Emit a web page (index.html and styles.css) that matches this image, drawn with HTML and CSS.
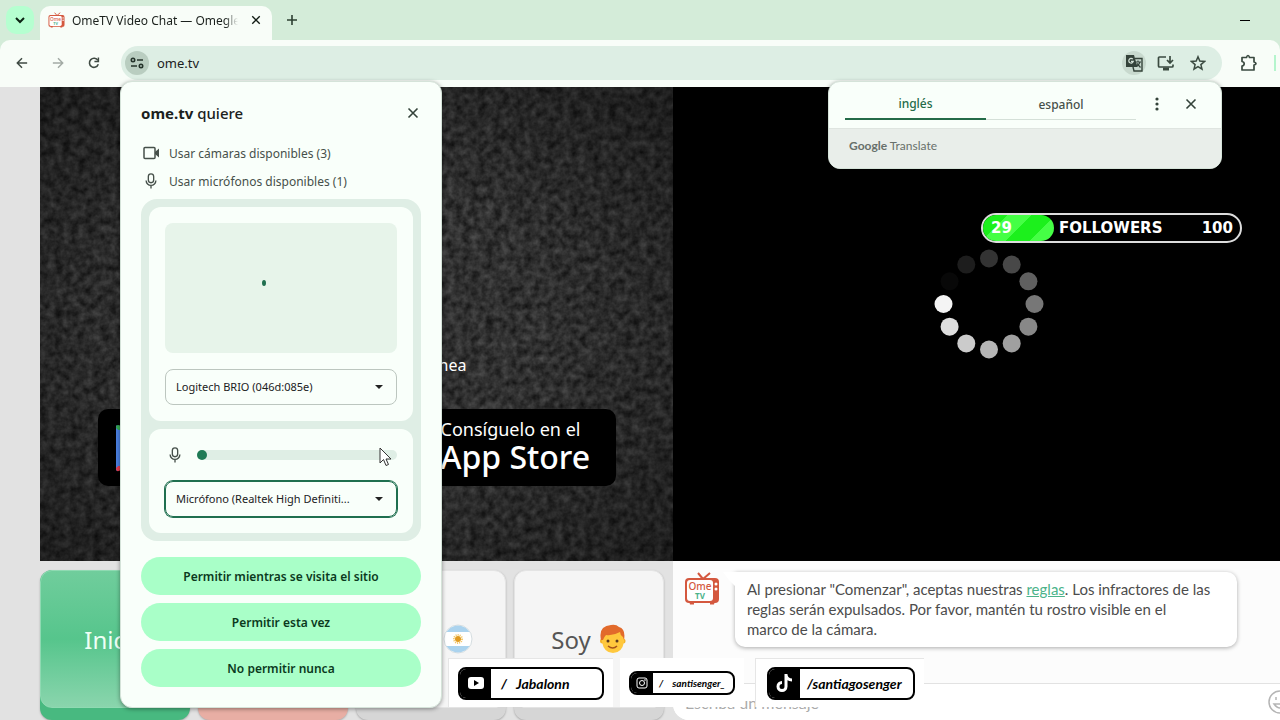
FILE: index.html
```html
<!DOCTYPE html>
<html lang="es">
<head>
	<meta charset="utf-8">
	<title>OmeTV Video Chat</title>
	<link rel="stylesheet" href="styles.css">
</head>
<body>
	<svg class="defs" width="0" height="0">
		<symbol id="mic" viewBox="0 0 16 18">
			<rect x="5" y="1" width="6" height="10" rx="3" fill="none" stroke="currentColor" stroke-width="1.5"/>
			<path d="M2.5 8.5a5.5 5.5 0 0 0 11 0M8 14v3.5" fill="none" stroke="currentColor" stroke-width="1.5"/>
		</symbol>
		<symbol id="close" viewBox="0 0 12 12">
			<path d="M1.5 1.5l9 9M10.5 1.5l-9 9" stroke="currentColor" stroke-width="1.6"/>
		</symbol>
		<symbol id="tv" viewBox="0 0 36 33">
			<path d="M14 1l5 6 7-6" fill="none" stroke="#d4583f" stroke-width="2"/>
			<rect x="1" y="6" width="34" height="25" rx="4" fill="#d4583f"/>
			<path d="M5 29h5v3.5H6zM26 29h5l-1 3.5h-4z" fill="#d4583f"/>
			<rect x="3" y="8" width="26" height="21" rx="3" fill="#fff"/>
			<circle cx="32" cy="12" r="1.5" fill="#fff"/>
			<circle cx="32" cy="17" r="1.5" fill="#fff"/>
			<text x="16" y="18" text-anchor="middle" font-size="10" font-weight="500" fill="#d4583f">Ome</text>
			<text x="16" y="27" text-anchor="middle" font-size="8" font-weight="700" fill="#4cb38a">TV</text>
		</symbol>
	</svg>

	<header class="browser">
		<div class="tabstrip">
			<button class="tab-search" aria-label="Buscar pestañas">
				<svg width="10" height="7" viewBox="0 0 10 7"><path d="M1 1l4 4 4-4" fill="none" stroke="#0b2313" stroke-width="2"/></svg>
			</button>
			<div class="tab">
				<svg width="17" height="16"><use href="#tv"/></svg>
				<span class="tab-title">OmeTV Video Chat — Omegle Random</span>
				<button class="icon-btn" aria-label="Cerrar pestaña"><svg width="10" height="10"><use href="#close"/></svg></button>
			</div>
			<button class="icon-btn new-tab" aria-label="Nueva pestaña">
				<svg width="12" height="12" viewBox="0 0 12 12"><path d="M6 1v10M1 6h10" stroke="#2c3f31" stroke-width="1.6"/></svg>
			</button>
			<button class="icon-btn minimize" aria-label="Minimizar"><svg width="10" height="10"><path d="M0 5.5h10" stroke="#000"/></svg></button>
		</div>
		<div class="toolbar">
			<div class="nav">
				<button class="icon-btn" aria-label="Atrás"><svg width="14" height="14" viewBox="0 0 14 14"><path d="M13 7H2M7 1.5L1.5 7 7 12.5" fill="none" stroke="#3f4a43" stroke-width="1.7"/></svg></button>
				<button class="icon-btn" aria-label="Adelante"><svg width="14" height="14" viewBox="0 0 14 14"><path d="M1 7h11M7 1.5L12.5 7 7 12.5" fill="none" stroke="#a3aba5" stroke-width="1.7"/></svg></button>
				<button class="icon-btn" aria-label="Recargar"><svg width="14" height="14" viewBox="0 0 14 14"><path d="M12 8.5A5.3 5.3 0 1 1 11.5 4" fill="none" stroke="#3f4a43" stroke-width="1.8"/><path d="M13 .5V6H7.5V4.4h3.8V.5z" fill="#3f4a43"/></svg></button>
			</div>
			<div class="omnibox">
				<button class="site-info" aria-label="Información del sitio">
					<svg width="14" height="12" viewBox="0 0 14 12" fill="none" stroke="#24332a" stroke-width="1.6"><circle cx="3" cy="3" r="1.7"/><path d="M7 3h6M1 9h6"/><circle cx="11" cy="9" r="1.7"/></svg>
				</button>
				<input class="url" type="text" value="ome.tv" aria-label="Dirección">
				<button class="round-btn shaded" aria-label="Traducir">
					<svg width="18" height="18" viewBox="0 0 18 18"><path d="M1 1h8l3.5 12H1z" fill="#34433a"/><path d="M10 4.5h7V17H9l-1-4" fill="none" stroke="#34433a" stroke-width="1.4"/><path d="M10.5 8h5.500M13 6.500V8M15 8q-1 3-3.500 4.500M12 9.500l3.500 4" fill="none" stroke="#34433a" stroke-width="1.2"/><path d="M7.800 5.200A2.300 2.300 0 1 0 8.300 7.400H6" fill="none" stroke="#d4e2d8" stroke-width="1.2"/></svg>
				</button>
				<button class="round-btn" aria-label="Instalar">
					<svg width="18" height="16" viewBox="0 0 18 16" fill="none" stroke="#3a4a40" stroke-width="1.7"><path d="M9 2H2.500Q1.500 2 1.500 3v8q0 1 1 1H15q1 0 1-1V9.500M13 1v6.500M10 5l3 3 3-3"/><path d="M6 14h6" stroke-width="3"/></svg>
				</button>
				<button class="round-btn" aria-label="Favoritos">
					<svg width="16" height="16" viewBox="0 0 16 16"><path d="M8 1.800l1.800 4.300 4.700.4-3.600 3.100 1.100 4.600L8 11.700l-4 2.500 1.100-4.600L1.500 6.500l4.700-.4z" fill="none" stroke="#3a4a40" stroke-width="1.5"/></svg>
				</button>
			</div>
			<button class="icon-btn extensions" aria-label="Extensiones">
				<svg width="18" height="18" viewBox="0 0 18 18"><path d="M2 3.500h4.500q.5-2 1.500-2t1.500 2H14v4.500q2 .5 2 1.500t-2 1.500V16H2v-4q2.200-.5 2.200-2.300T2 7.500z" fill="none" stroke="#3a4a40" stroke-width="1.7" stroke-linejoin="round"/></svg>
			</button>
			<span class="divider"></span>
		</div>
	</header>

	<main class="page">
		<section class="video stranger">
			<svg class="noise" width="100%" height="100%">
				<filter id="grain" x="0" y="0" width="100%" height="100%" color-interpolation-filters="sRGB">
					<feTurbulence type="fractalNoise" baseFrequency="0.13" numOctaves="3" seed="4"/>
					<feColorMatrix values=".3 0 0 0 .04  .3 0 0 0 .04  .3 0 0 0 .04  0 0 0 0 1"/>
				</filter>
				<rect width="100%" height="100%" filter="url(#grain)"/>
			</svg>
			<div class="vignette"></div>
			<div class="promo">
				<p class="online">usuarios en línea</p>
				<div class="stores">
					<a href="#" class="store google" aria-label="Google Play">
						<svg width="46" height="50" viewBox="0 0 46 50"><path d="M2 2l22 23L2 48z" fill="#4a7fe0"/><path d="M2 5q0-5 5-2l25 15-8 7z" fill="#34a853"/><path d="M2 45q0 5 5 2l25-15-8-7z" fill="#e33b4e"/><path d="M2 7h8v36H2z" fill="#4a7fe0"/><path d="M32 18l12 7-12 7-8-7z" fill="#fbbc04"/></svg>
					</a>
					<a href="#" class="store apple">
						<span class="store-small">Consíguelo en el</span>
						<span class="store-name">App Store</span>
					</a>
				</div>
			</div>
		</section>

		<section class="video own">
			<svg width="110" height="110" viewBox="-55 -55 110 110">
				<circle cx="0" cy="-45.5" r="9" fill="#333"/>
				<circle cx="22.7" cy="-39.4" r="9" fill="#484848"/>
				<circle cx="39.4" cy="-22.7" r="9" fill="#606060"/>
				<circle cx="45.5" cy="0" r="9" fill="#777"/>
				<circle cx="39.4" cy="22.7" r="9" fill="#888"/>
				<circle cx="22.7" cy="39.4" r="9" fill="#a0a0a0"/>
				<circle cx="0" cy="45.5" r="9" fill="#b5b5b5"/>
				<circle cx="-22.7" cy="39.4" r="9" fill="#cbcbcb"/>
				<circle cx="-39.4" cy="22.7" r="9" fill="#dedede"/>
				<circle cx="-45.5" cy="0" r="9" fill="#f4f4f4"/>
				<circle cx="-39.4" cy="-22.7" r="9" fill="#080808"/>
				<circle cx="-22.7" cy="-39.4" r="9" fill="#1d1d1d"/>
			</svg>
		</section>

		<section class="controls">
			<button class="key green"><span class="face">Inicio</span></button>
			<button class="key pink" aria-label="Parar"><span class="face"></span></button>
			<button class="key"><span class="face">País
				<svg width="30" height="30" viewBox="0 0 30 30"><circle cx="15" cy="15" r="14" fill="#fff" stroke="#d5dde0"/><path d="M3.500 8a13.500 13.500 0 0 1 23 0zM3.500 22a13.500 13.500 0 0 0 23 0z" fill="#abd3ee"/><circle cx="15" cy="15" r="3" fill="#e09a20"/><circle cx="15" cy="15" r="4" fill="none" stroke="#f3c460" stroke-width="2" stroke-dasharray="1 1"/></svg>
			</span></button>
			<button class="key"><span class="face">Soy
				<svg width="28" height="30" viewBox="0 0 28 30"><circle cx="3.500" cy="17" r="2.500" fill="#f4b42c"/><circle cx="24" cy="17" r="2.500" fill="#f4b42c"/><path d="M3 13q0-8 11-8t11 8v5q-2 11-11 11T3 18z" fill="#ffc83d"/><path d="M2 16Q-1 2 12 1q5-1 8 2 7 2 5 13l-1-3q-3-2-3-5-7 4-14 3-2 2-3 5z" fill="#e26a2b"/><circle cx="9" cy="17" r="1.5" fill="#5b3a20"/><circle cx="18" cy="17" r="1.5" fill="#5b3a20"/><path d="M9 22q5 4 9 0" fill="none" stroke="#a6531b" stroke-width="1.5"/></svg>
			</span></button>
		</section>

		<section class="chat">
			<div class="messages">
				<svg width="36" height="33"><use href="#tv"/></svg>
				<p class="message">Al presionar "Comenzar", aceptas nuestras <a href="#">reglas</a>. Los infractores de las reglas serán expulsados. Por favor, mantén tu rostro visible en el<br>marco de la cámara.</p>
			</div>
			<form class="compose">
				<input type="text" placeholder="Escriba un mensaje" aria-label="Mensaje">
				<button type="button" class="icon-btn" aria-label="Emoji">
					<svg width="24" height="24" viewBox="0 0 24 24" fill="none" stroke="#b5b5b5" stroke-width="1.5"><circle cx="12" cy="12" r="11"/><path d="M6 14q6 8 12 0z"/><path d="M8 7v3M16 7v3"/></svg>
				</button>
			</form>
		</section>
	</main>

	<!-- permission prompt -->
	<div class="dialog permission" role="dialog" aria-labelledby="ask">
		<div class="dialog-head">
			<h1 id="ask"><b>ome.tv</b> quiere</h1>
			<button class="icon-btn" aria-label="Cerrar"><svg width="12" height="12"><use href="#close"/></svg></button>
		</div>
		<ul class="requests">
			<li><svg width="18" height="18" viewBox="0 0 18 18"><rect x="2" y="3.5" width="11" height="11" rx="1" fill="none" stroke="currentColor" stroke-width="1.5"/><path d="M13 8l4-3.500v9L13 10z" fill="currentColor"/></svg>Usar cámaras disponibles (3)</li>
			<li><svg width="18" height="16"><use href="#mic"/></svg>Usar micrófonos disponibles (1)</li>
		</ul>
		<div class="devices">
			<div class="device">
				<div class="preview"><svg width="6" height="8"><ellipse cx="3" cy="4" rx="2" ry="3" fill="#1f6f4f"/></svg></div>
				<div class="select">
					<select aria-label="Cámara"><option>Logitech BRIO (046d:085e)</option></select>
				</div>
			</div>
			<div class="device">
				<div class="level">
					<svg width="20" height="16"><use href="#mic"/></svg>
					<input type="range" min="0" max="100" value="0" aria-label="Nivel del micrófono">
				</div>
				<div class="select focused">
					<select aria-label="Micrófono"><option>Micrófono (Realtek High Definiti...</option></select>
				</div>
			</div>
		</div>
		<div class="answers">
			<button>Permitir mientras se visita el sitio</button>
			<button>Permitir esta vez</button>
			<button>No permitir nunca</button>
		</div>
	</div>

	<div class="dialog translate">
		<div class="languages">
			<button class="language active">inglés</button>
			<button class="language">español</button>
			<button class="icon-btn" aria-label="Opciones"><svg width="4" height="14" fill="#34433a"><circle cx="2" cy="2" r="1.6"/><circle cx="2" cy="7" r="1.6"/><circle cx="2" cy="12" r="1.6"/></svg></button>
			<button class="icon-btn" aria-label="Cerrar"><svg width="12" height="12"><use href="#close"/></svg></button>
		</div>
		<div class="brand"><b>Google</b> Translate</div>
	</div>

	<!-- stream overlays -->
	<div class="goal">
		<div class="goal-done">29</div>
		<span>FOLLOWERS</span>
		<span class="goal-total">100</span>
	</div>

	<div class="socials">
		<div class="social">
			<div class="handle">
				<span class="logo"><svg width="18" height="14" viewBox="0 0 18 14"><rect x="1" y="1" width="16" height="12" rx="3" fill="#fff"/><path d="M7 4l5 3-5 3z"/></svg></span>
				<span class="name"><i>/</i> Jabalonn</span>
			</div>
		</div>
		<div class="social instagram">
			<div class="handle">
				<span class="logo"><svg width="12" height="12" viewBox="0 0 12 12" fill="none" stroke="#fff"><rect x="1" y="1" width="10" height="10" rx="2"/><circle cx="6" cy="6" r="2.5"/><circle cx="9" cy="3" r=".4"/></svg></span>
				<span class="name"><i>/</i> santisenger_</span>
			</div>
		</div>
		<div class="social tiktok">
			<div class="handle">
				<span class="logo"><svg width="18" height="20" viewBox="0 0 18 20"><path d="M10 1v12.500a4 4 0 1 1-4-4M10 2q1 5 6 5" fill="none" stroke="#fff" stroke-width="3"/></svg></span>
				<span class="name">/santiagosenger</span>
			</div>
		</div>
	</div>

	<svg class="cursor" width="13" height="20" viewBox="0 0 13 20"><path d="M1 1v15l3.500-3.500 2.500 6 2.500-1-2.500-5.500h5z" fill="#fff" stroke="#333"/></svg>
</body>
</html>
```
FILE: styles.css
```css
* {
	box-sizing: border-box;
}
body {
	margin: 0;
	height: 100vh;
	display: flex;
	flex-direction: column;
	overflow: hidden;
	position: relative;
	background: #e2e2e2;
	color: #1b211d;
	font-family: "Noto Sans", "Open Sans", sans-serif;
	font-size: 12px;
}
button, input, select {
	font: inherit;
	color: inherit;
}
button {
	border: 0;
	padding: 0;
}
.defs {
	display: none;
}
.icon-btn {
	display: flex;
	align-items: center;
	justify-content: center;
	background: none;
	color: #34433a;
}

/* browser */
.browser {
	background: #d4ecd9;
}
.tabstrip {
	height: 40px;
	display: flex;
	align-items: center;
	padding: 0 30px 0 6px;
}
.tab-search {
	width: 28px;
	height: 28px;
	border-radius: 10px;
	background: #b5ffd0;
	display: flex;
	align-items: center;
	justify-content: center;
}
.tab {
	align-self: flex-end;
	width: 232px;
	height: 34px;
	margin-left: 6px;
	padding: 0 10px 6px 8px;
	border-radius: 10px 10px 0 0;
	background: #f8fdf8;
	display: flex;
	align-items: center;
	gap: 7px;
}
.tab .icon-btn {
	width: 12px;
	margin-left: auto;
	color: #101a13;
}
.tab-title {
	width: 166px;
	overflow: hidden;
	white-space: nowrap;
	-webkit-mask-image: linear-gradient(to right, #000 92%, transparent);
	mask-image: linear-gradient(to right, #000 92%, transparent);
}
.new-tab {
	margin-left: 14px;
}
.minimize {
	margin-left: auto;
}
.toolbar {
	height: 47px;
	padding: 0 4px 2px 16px;
	border-radius: 10px 10px 0 0;
	background: #f8fdf8;
	display: flex;
	align-items: center;
}
.nav {
	display: flex;
	gap: 24px;
	width: 105px;
	flex: none;
}
.nav .icon-btn {
	width: 12px;
}
.omnibox {
	flex: 1;
	height: 34px;
	border-radius: 17px;
	padding: 0 12px 0 4px;
	background: #ddeee4;
	display: flex;
	align-items: center;
	gap: 8px;
}
.site-info, .round-btn {
	width: 24px;
	height: 24px;
	border-radius: 12px;
	background: none;
	display: flex;
	align-items: center;
	justify-content: center;
}
.site-info {
	background: #b9cdc0;
}
.shaded {
	background: #c8d9ce;
}
.url {
	flex: 1;
	border: 0;
	padding: 0;
	background: none;
	font-size: 13px;
}
.extensions {
	margin: 0 16px 0 18px;
}
.divider {
	width: 2px;
	height: 16px;
	background: #b5f5cd;
}

/* site; the last strip of the right column runs past the window */
.page {
	flex: 1;
	margin: 0 -26px 0 40px;
	display: grid;
	grid-template-columns: 1fr 1fr;
	grid-template-rows: 1fr 159px;
}
.video {
	position: relative;
	background: #000;
	display: flex;
	justify-content: center;
	overflow: hidden;
}
.own {
	align-items: center;
	padding: 0 2px 40px 0;
}
.noise, .vignette {
	position: absolute;
	left: 0;
	top: 0;
}
.vignette {
	width: 100%;
	height: 100%;
	background: radial-gradient(transparent 40%, rgba(0, 0, 0, .4));
}
.promo {
	position: relative;
	align-self: flex-end;
	margin-bottom: 75px;
	color: #fff;
}
.online {
	margin: 0 149px 32px 0;
	text-align: right;
	font-size: 16px;
	line-height: 24px;
}
.stores {
	display: flex;
	gap: 18px;
}
.store {
	width: 250px;
	height: 77px;
	border-radius: 10px;
	background: #000;
	color: #fff;
	text-decoration: none;
	display: flex;
	flex-direction: column;
	justify-content: center;
}
.google {
	padding-left: 16px;
}
.apple {
	padding: 0 0 4px 75px;
}
.store-small {
	font-size: 18px;
	line-height: 22px;
	white-space: nowrap;
}
.store-name {
	font-size: 32px;
	line-height: 34px;
	font-weight: 500;
	white-space: nowrap;
}

.controls {
	padding: 9px 9px 0 0;
	display: grid;
	grid-template-columns: repeat(4, 1fr);
	gap: 8px;
}
.key {
	display: flex;
	flex-direction: column;
	border-radius: 12px;
	background: #d6d6d6;
	box-shadow: 0 1px 2px #aaa;
	color: #555;
	font-size: 24px;
}
.face {
	width: 100%;
	height: 138px;
	border-radius: 12px;
	background: #f5f5f5;
	border: 1px solid #e4e4e4;
	display: flex;
	align-items: center;
	justify-content: center;
	gap: 8px;
}
.green {
	background: #48b980;
	color: #effff6;
}
.green .face {
	border-color: #8fdab2;
	background: linear-gradient(#70cd9c, #56c58c 50%, #8ad5ad);
}
.pink, .pink .face {
	background: #e8aea4;
	border-color: #e8aea4;
}

.chat {
	display: flex;
	flex-direction: column;
	background: #fcfcfc;
	border-radius: 0 0 0 16px;
}
.messages {
	flex: 1;
	display: flex;
	align-items: flex-start;
	gap: 15px;
	padding: 11px 69px 0 11px;
}
.messages svg {
	flex: none;
}
.message {
	flex: 1;
	position: relative;
	margin: 0;
	padding: 7px 12px 8px;
	border-radius: 0 10px 10px 10px;
	background: #fff;
	box-shadow: 0 1px 4px #aaa;
	color: #4c4c4c;
	font-family: Lato, sans-serif;
	font-size: 15px;
	line-height: 20px;
}
.message::before {
	content: "";
	position: absolute;
	left: -12px;
	top: 0;
	border: 6px solid transparent;
	border-top: 8px solid #fff;
	border-right: 6px solid #fff;
}
.message a {
	color: #4cb38a;
}
.compose {
	height: 37px;
	margin: 0;
	padding: 0 14px 0 12px;
	border-top: 1px solid #e2e2e2;
	border-radius: 0 0 0 16px;
	background: #fff;
	display: flex;
	align-items: center;
}
.compose input {
	flex: 1;
	border: 0;
	background: none;
	padding: 0;
	font-family: Lato, sans-serif;
	font-size: 16px;
}
.compose input::placeholder {
	color: #aaa;
}

/* browser bubbles */
.dialog {
	position: absolute;
	border: 1px solid #d5e3d9;
	border-radius: 12px;
	background: #f9fffa;
	box-shadow: 0 1px 4px rgba(0, 0, 0, .4);
}
.permission {
	left: 120px;
	top: 81px;
	width: 322px;
	padding: 16px 20px 20px;
}
.dialog-head {
	height: 30px;
	margin-bottom: 11px;
	display: flex;
	align-items: center;
	justify-content: space-between;
}
.dialog-head h1 {
	margin: 0;
	font-size: 15px;
	font-weight: 500;
}
.dialog-head .icon-btn {
	width: 16px;
	height: 16px;
}
.requests {
	margin: 0 0 4px;
	padding: 0;
	list-style: none;
	color: #46504a;
}
.requests li {
	height: 28px;
	display: flex;
	align-items: center;
	gap: 9px;
	padding-left: 1px;
}
.devices {
	padding: 8px;
	border-radius: 16px;
	background: #dfeee5;
	display: grid;
	gap: 8px;
}
.device {
	padding: 16px;
	border-radius: 12px;
	background: #f9fffa;
	display: grid;
	gap: 16px;
}
.preview {
	height: 130px;
	border-radius: 8px;
	background: #e7f4ea;
	display: flex;
	align-items: center;
	padding: 0 96px 10px;
}
.select {
	position: relative;
}
.select::after {
	content: "";
	position: absolute;
	right: 14px;
	top: 16px;
	border: 4px solid transparent;
	border-top-color: #222;
	border-bottom: 0;
}
.select select {
	appearance: none;
	display: block;
	width: 100%;
	height: 36px;
	padding: 0 30px 2px 10px;
	border: 1px solid #bcc6bf;
	border-radius: 8px;
	background: none;
	font-size: 11px;
}
.focused select {
	border-color: #1f6f4f;
	box-shadow: 0 0 0 1px #1f6f4f;
}
.level {
	height: 20px;
	display: flex;
	align-items: center;
	gap: 12px;
	color: #46504a;
}
.level input {
	appearance: none;
	flex: 1;
	height: 10px;
	margin: 0;
	border-radius: 5px;
	background: #dfeee5;
}
.level input::-webkit-slider-thumb {
	appearance: none;
	width: 10px;
	height: 10px;
	border-radius: 5px;
	background: #1f7a55;
}
.answers {
	margin-top: 16px;
	display: grid;
	gap: 8px;
}
.answers button {
	height: 38px;
	border-radius: 19px;
	background: #a9ffc8;
	color: #0b3a1d;
	font-weight: 600;
}
.translate {
	right: 58px;
	top: 81px;
	width: 394px;
	overflow: hidden;
}
.languages {
	height: 46px;
	padding: 0 24px 8px 16px;
	display: flex;
	align-items: center;
}
.language {
	width: 150px;
	height: 38px;
	background: none;
	border-bottom: 1px solid #d5e0d8;
	padding-top: 7px;
	font-weight: 500;
	color: #46504a;
}
.language.active {
	width: 141px;
	border-bottom: 2px solid #246b48;
	color: #246b48;
}
.languages .icon-btn {
	width: 12px;
	margin: 6px 0 0 15px;
}
.languages .icon-btn + .icon-btn {
	margin-left: 22px;
}
.brand {
	height: 40px;
	padding: 8px 20px;
	border-top: 1px solid #dfe5e0;
	background: #e9eeea;
	color: #68706b;
	font-family: Lato, sans-serif;
	line-height: 18px;
}

/* stream */
.goal {
	position: absolute;
	right: 38px;
	top: 213px;
	width: 261px;
	height: 30px;
	border: 2px solid #ddd;
	border-radius: 15px;
	background: #000;
	color: #fff;
	display: flex;
	align-items: center;
	font: bold 15px "DejaVu Sans", sans-serif;
}
.goal-done {
	width: 71px;
	height: 26px;
	margin-right: 5px;
	padding-left: 8px;
	border-radius: 13px;
	background: linear-gradient(135deg, #1cf01c 25%, #45ff45 25%, #45ff45 50%, #1cf01c 50%, #1cf01c 75%, #45ff45 75%);
	line-height: 26px;
}
.goal-total {
	margin-left: auto;
	padding-right: 7px;
}
.socials {
	position: absolute;
	left: 448px;
	bottom: 13px;
	height: 49px;
	display: flex;
	font-family: Lato, sans-serif;
	font-style: italic;
	font-weight: bold;
	color: #000;
}
.social {
	width: 165px;
	padding: 0 9px;
	margin-right: 7px;
	background: #fff;
	border: 1px solid #e6e6e6;
	border-width: 1px 0 0 1px;
	display: flex;
	align-items: center;
}
.handle {
	flex: 1;
	height: 33px;
	border: 2px solid #000;
	border-radius: 8px;
	display: flex;
	overflow: hidden;
	font-size: 14px;
}
.logo {
	flex: none;
	width: 31px;
	background: #000;
	display: flex;
	align-items: center;
	justify-content: center;
}
.name {
	flex: 1;
	display: flex;
	align-items: center;
	gap: 9px;
	padding-left: 10px;
	white-space: nowrap;
}
.instagram {
	width: 124px;
	padding: 0 9px 0 8px;
	margin-right: 11px;
	border-color: #fff;
}
.instagram .handle {
	height: 24px;
	font-size: 10px;
}
.instagram .logo {
	width: 22px;
}
.instagram .name {
	padding-left: 6px;
}
.tiktok {
	width: 169px;
	padding: 0 9px 0 11px;
}
.tiktok .name {
	padding-left: 7px;
}
.cursor {
	position: absolute;
	left: 379px;
	top: 447px;
}
```
